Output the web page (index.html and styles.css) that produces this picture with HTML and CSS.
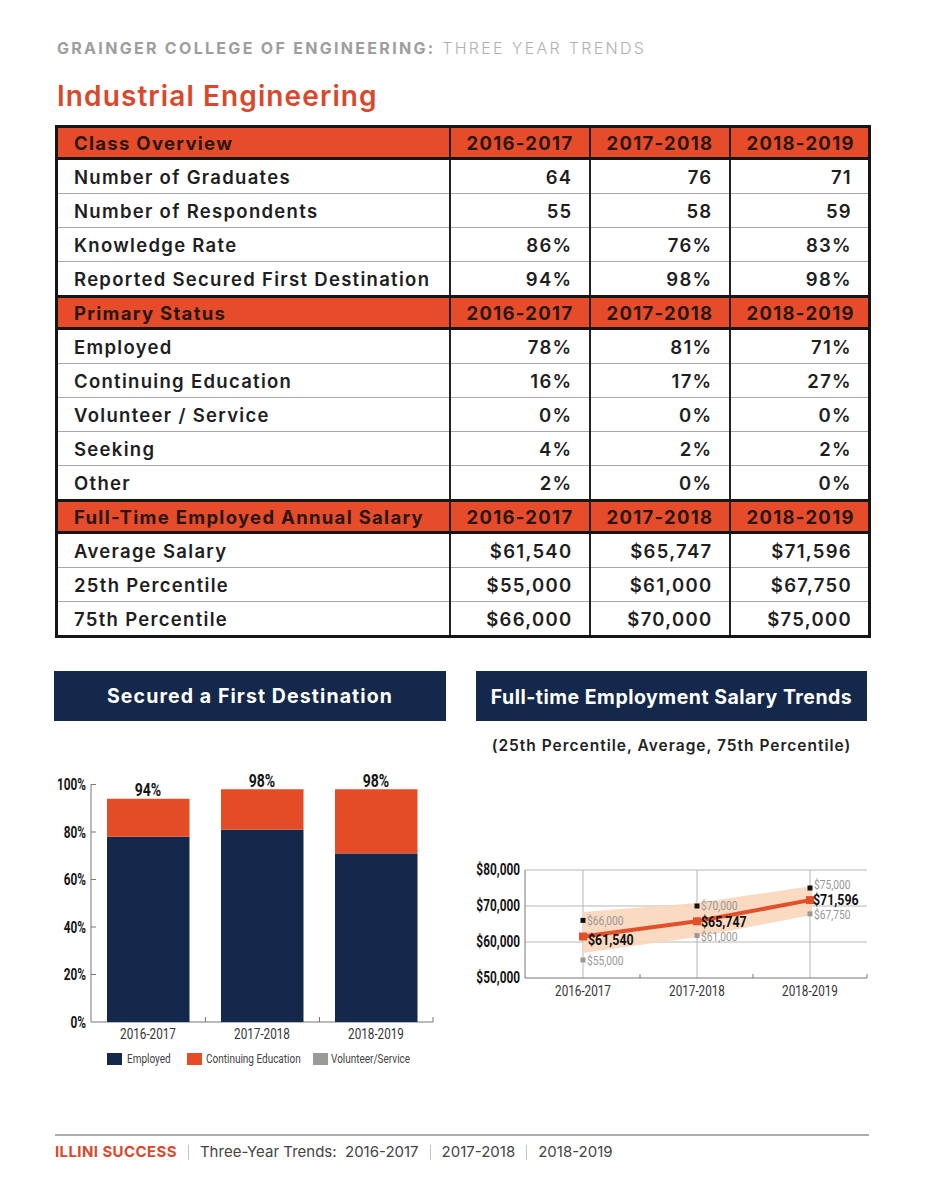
FILE: index.html
```html
<!DOCTYPE html>
<html>
<head>
<meta charset="utf-8">
<link rel="stylesheet" href="styles.css">
</head>
<body>
<div class="page">
  <div class="eyebrow"><span class="eb-strong">GRAINGER COLLEGE OF ENGINEERING:</span> <span class="eb-light">THREE YEAR TRENDS</span></div>
  <h1 class="title">Industrial Engineering</h1>

  <table class="stats">
    <colgroup><col class="c-label"><col class="c-num"><col class="c-num"><col class="c-num"></colgroup>
    <tr class="head"><th>Class Overview</th><th>2016-2017</th><th>2017-2018</th><th>2018-2019</th></tr>
    <tr><td>Number of Graduates</td><td>64</td><td>76</td><td>71</td></tr>
    <tr><td>Number of Respondents</td><td>55</td><td>58</td><td>59</td></tr>
    <tr><td>Knowledge Rate</td><td>86%</td><td>76%</td><td>83%</td></tr>
    <tr><td>Reported Secured First Destination</td><td>94%</td><td>98%</td><td>98%</td></tr>
    <tr class="head"><th>Primary Status</th><th>2016-2017</th><th>2017-2018</th><th>2018-2019</th></tr>
    <tr><td>Employed</td><td>78%</td><td>81%</td><td>71%</td></tr>
    <tr><td>Continuing Education</td><td>16%</td><td>17%</td><td>27%</td></tr>
    <tr><td>Volunteer / Service</td><td>0%</td><td>0%</td><td>0%</td></tr>
    <tr><td>Seeking</td><td>4%</td><td>2%</td><td>2%</td></tr>
    <tr><td>Other</td><td>2%</td><td>0%</td><td>0%</td></tr>
    <tr class="head"><th>Full-Time Employed Annual Salary</th><th>2016-2017</th><th>2017-2018</th><th>2018-2019</th></tr>
    <tr><td>Average Salary</td><td>$61,540</td><td>$65,747</td><td>$71,596</td></tr>
    <tr><td>25th Percentile</td><td>$55,000</td><td>$61,000</td><td>$67,750</td></tr>
    <tr><td>75th Percentile</td><td>$66,000</td><td>$70,000</td><td>$75,000</td></tr>
  </table>

  <div class="charts">
    <section class="chart-col left">
      <div class="chart-title t-left">Secured a First Destination</div>
      <svg class="bar-chart" width="392" height="320" viewBox="54 760 392 320">
        <g class="axis">
          <line x1="91" y1="783.5" x2="91" y2="1021"/>
          <line x1="91" y1="1021" x2="433" y2="1021"/>
          <line x1="91" y1="783.5" x2="96" y2="783.5"/>
          <line x1="91" y1="831" x2="96" y2="831"/>
          <line x1="91" y1="878.5" x2="96" y2="878.5"/>
          <line x1="91" y1="926" x2="96" y2="926"/>
          <line x1="91" y1="973.5" x2="96" y2="973.5"/>
          <line x1="205.5" y1="1016" x2="205.5" y2="1021"/>
          <line x1="319.5" y1="1016" x2="319.5" y2="1021"/>
          <line x1="433" y1="1016" x2="433" y2="1021"/>
        </g>
        <g class="ylab">
          <text transform="translate(86 789) scale(0.74 1)">100%</text>
          <text transform="translate(86 836.5) scale(0.74 1)">80%</text>
          <text transform="translate(86 884) scale(0.74 1)">60%</text>
          <text transform="translate(86 931.5) scale(0.74 1)">40%</text>
          <text transform="translate(86 979) scale(0.74 1)">20%</text>
          <text transform="translate(86 1026.5) scale(0.74 1)">0%</text>
        </g>
        <rect class="navy" x="107" y="835.75" width="82.5" height="185.25"/>
        <rect class="orange" x="107" y="797.75" width="82.5" height="38"/>
        <rect class="navy" x="221" y="828.6" width="82.5" height="192.4"/>
        <rect class="orange" x="221" y="788.25" width="82.5" height="40.35"/>
        <rect class="navy" x="335" y="852.4" width="82.5" height="168.6"/>
        <rect class="orange" x="335" y="788.25" width="82.5" height="64.15"/>
        <g class="toplab">
          <text transform="translate(148 795) scale(0.74 1)">94%</text>
          <text transform="translate(262 785.5) scale(0.74 1)">98%</text>
          <text transform="translate(376 785.5) scale(0.74 1)">98%</text>
        </g>
        <g class="xlab">
          <text transform="translate(148 1038) scale(0.78 1)">2016-2017</text>
          <text transform="translate(262 1038) scale(0.78 1)">2017-2018</text>
          <text transform="translate(376 1038) scale(0.78 1)">2018-2019</text>
        </g>
        <rect class="navy" x="107" y="1052" width="15" height="12"/>
        <rect class="orange" x="187" y="1052" width="15" height="12"/>
        <rect class="grey" x="313" y="1052" width="15" height="12"/>
        <g class="legend">
          <text transform="translate(127 1062) scale(0.8 1)">Employed</text>
          <text transform="translate(206 1062) scale(0.8 1)">Continuing Education</text>
          <text transform="translate(331 1062) scale(0.8 1)">Volunteer/Service</text>
        </g>
      </svg>
    </section>

    <section class="chart-col right">
      <div class="chart-title t-right">Full-time Employment Salary Trends</div>
      <div class="chart-sub">(25th Percentile, Average, 75th Percentile)</div>
      <svg class="line-chart" width="391" height="160" viewBox="476 850 391 160">
        <g class="grid">
          <line x1="525" y1="869" x2="867" y2="869"/>
          <line x1="525" y1="905" x2="867" y2="905"/>
          <line x1="525" y1="941" x2="867" y2="941"/>
          <line x1="583" y1="869" x2="583" y2="977"/>
          <line x1="697" y1="869" x2="697" y2="977"/>
          <line x1="810" y1="869" x2="810" y2="977"/>
        </g>
        <g class="axis">
          <line x1="525" y1="869" x2="525" y2="977"/>
          <line x1="525" y1="977" x2="867" y2="977"/>
          <line x1="640" y1="973" x2="640" y2="977"/>
          <line x1="753" y1="973" x2="753" y2="977"/>
          <line x1="867" y1="973" x2="867" y2="977"/>
        </g>
        <g class="ylab">
          <text transform="translate(520 874) scale(0.74 1)">$80,000</text>
          <text transform="translate(520 910) scale(0.74 1)">$70,000</text>
          <text transform="translate(520 946) scale(0.74 1)">$60,000</text>
          <text transform="translate(520 982) scale(0.74 1)">$50,000</text>
        </g>
        <polygon class="band" points="583,911 697,902 812,885 812,914 697,936 583,952"/>
        <polyline class="avg-line" points="583,935.5 697,920.3 810,899.1"/>
        <rect class="sq-black" x="580.5" y="916.9" width="5" height="5"/>
        <rect class="sq-black" x="694.5" y="902.5" width="5" height="5"/>
        <rect class="sq-black" x="807.5" y="884.5" width="5" height="5"/>
        <rect class="sq-grey" x="580.5" y="956.5" width="5" height="5"/>
        <rect class="sq-grey" x="694.5" y="932.1" width="5" height="5"/>
        <rect class="sq-grey" x="807.5" y="910.4" width="5" height="5"/>
        <rect class="sq-orange" x="579" y="931.5" width="8" height="8"/>
        <rect class="sq-orange" x="693" y="916.3" width="8" height="8"/>
        <rect class="sq-orange" x="806" y="895.1" width="8" height="8"/>
        <g class="pt-lab">
          <text transform="translate(587 923.5) scale(0.76 1)">$66,000</text>
          <text transform="translate(587 963.5) scale(0.76 1)">$55,000</text>
          <text transform="translate(701 908.5) scale(0.76 1)">$70,000</text>
          <text transform="translate(701 940) scale(0.76 1)">$61,000</text>
          <text transform="translate(814 888) scale(0.76 1)">$75,000</text>
          <text transform="translate(814 918) scale(0.76 1)">$67,750</text>
        </g>
        <g class="avg-lab">
          <text transform="translate(588 944) scale(0.8 1)">$61,540</text>
          <text transform="translate(701 925.5) scale(0.8 1)">$65,747</text>
          <text transform="translate(813 904) scale(0.8 1)">$71,596</text>
        </g>
        <g class="xlab">
          <text transform="translate(583 995) scale(0.78 1)">2016-2017</text>
          <text transform="translate(697 995) scale(0.78 1)">2017-2018</text>
          <text transform="translate(810 995) scale(0.78 1)">2018-2019</text>
        </g>
      </svg>
    </section>
  </div>

  <footer class="foot">
    <span class="brand">ILLINI SUCCESS</span><span class="sep"></span><span>Three-Year Trends:&nbsp; 2016-2017</span><span class="sep"></span><span>2017-2018</span><span class="sep"></span><span>2018-2019</span>
  </footer>
</div>
</body>
</html>
```
FILE: styles.css
```css
html, body {
  margin: 0;
  padding: 0;
  background: #ffffff;
}
body {
  font-family: "Inter", "Noto Sans", "DejaVu Sans", sans-serif;
  color: #1f1f1f;
}
.page {
  width: 926px;
  height: 1200px;
  box-sizing: border-box;
  padding: 38px 57px 0 55px;
}
.eyebrow {
  font-size: 16px;
  line-height: 20px;
  letter-spacing: 2.3px;
  color: #9e9e9e;
  padding-left: 2px;
  white-space: nowrap;
}
.eb-strong { font-weight: 700; }
.eb-light { font-weight: 300; color: #b0b0b0; }
.title {
  margin: 18px 0 0 2px;
  font-size: 28px;
  line-height: 40px;
  font-weight: 600;
  color: #d9482b;
  letter-spacing: 1.1px;
}
.stats {
  margin-top: 9px;
  width: 814px;
  border-collapse: collapse;
  border: 3px solid #161616;
  table-layout: fixed;
}
.c-label { width: 393px; }
.c-num { width: 140px; }
.stats th, .stats td {
  padding: 0 16px 0 16px;
  font-size: 18.5px;
  font-weight: 600;
  line-height: 20px;
  border-left: 2px solid #222;
  border-top: 1px solid #a8a8a8;
  color: #1e1e1e;
  letter-spacing: 1.3px;
  white-space: nowrap;
}
.stats td { height: 33px; }
.stats .head th { height: 29px; }
.stats th:first-child, .stats td:first-child {
  text-align: left;
  border-left: 0;
}
.stats td:not(:first-child) { text-align: right; }
.stats .head th {
  background: #e64c2a;
  border-top: 3px solid #161616;
  border-bottom: 3px solid #161616;
  color: #2a1712;
  font-weight: 700;
  text-align: center;
}
.stats .head th:first-child { text-align: left; }

.charts {
  margin-top: 33px;
  display: grid;
  grid-template-columns: 392px 391px;
  column-gap: 30px;
  margin-left: -1px;
}
.chart-col { display: flex; flex-direction: column; }
.chart-title {
  height: 50px;
  background: #13284a;
  color: #ffffff;
  font-size: 19.5px;
  font-weight: 700;
  display: flex;
  align-items: center;
  justify-content: center;
  white-space: nowrap;
}
.t-left { letter-spacing: 1.1px; }
.t-right { letter-spacing: 0.5px; padding-top: 2px; box-sizing: border-box; }
.left .bar-chart { margin-top: 40px; overflow: visible; }
.chart-sub {
  margin-top: 15px;
  text-align: center;
  font-size: 15.5px;
  font-weight: 600;
  line-height: 20px;
  letter-spacing: 1px;
  color: #222;
  white-space: nowrap;
}
.right .line-chart { margin-top: 95px; overflow: visible; }

svg text { font-family: "Roboto", "Liberation Sans", sans-serif; }
.axis line { stroke: #777; stroke-width: 1; }
.grid line { stroke: #a5a5a5; stroke-width: 0.8; }
.ylab text { font-size: 16px; font-weight: 700; fill: #141414; text-anchor: end; }
.toplab text { font-size: 19px; font-weight: 700; fill: #141414; text-anchor: middle; }
.xlab text { font-size: 15px; font-weight: 400; fill: #333; text-anchor: middle; }
.legend text { font-size: 12.5px; fill: #444; }
.navy { fill: #13284a; }
.orange { fill: #e34c26; }
.grey { fill: #9a9a9a; }
.band { fill: #fbd6bb; opacity: 0.9; }
.avg-line { fill: none; stroke: #e2502b; stroke-width: 4; }
.sq-black { fill: #111; }
.sq-grey { fill: #999; }
.sq-orange { fill: #e2502b; }
.pt-lab text { font-size: 13.5px; font-weight: 400; fill: #979797; }
.avg-lab text { font-size: 15.5px; font-weight: 700; fill: #111; }

.foot {
  margin-top: 53px;
  border-top: 2px solid #adadad;
  padding-top: 6px;
  display: flex;
  align-items: center;
  font-size: 15px;
  color: #444;
  line-height: 20px;
  white-space: nowrap;
}
.brand { color: #d9482b; font-weight: 700; letter-spacing: 0.4px; }
.sep {
  display: inline-block;
  width: 1px;
  height: 15px;
  background: #c4c4c4;
  margin: 0 11px;
}
```
